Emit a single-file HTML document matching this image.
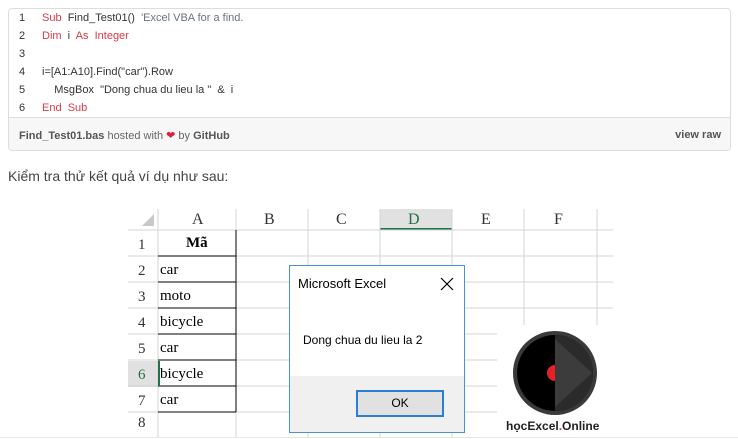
<!DOCTYPE html>
<html><head><style>
body{margin:0;width:738px;height:439px;background:#fff;position:relative;overflow:hidden;font-family:"Liberation Sans",sans-serif}
.gist{position:absolute;left:8px;top:8px;width:723px;height:143px;border:1px solid #ddd;border-radius:4px;box-sizing:border-box;overflow:hidden}
.ln{position:absolute;font-size:11px;color:#333;line-height:18px;white-space:pre}
.k{color:#d73a49}.c{color:#6a737d}
.foot{position:absolute;left:0;top:108px;width:100%;height:35px;background:#f7f7f7;border-top:1px solid #ddd;font-size:11px;color:#666}
.xl{position:absolute;left:128px;top:209px;width:485px;height:228px;background:#fff;font-family:"Liberation Serif",serif;overflow:hidden}
.a{position:absolute;font-size:15px;color:#000}
</style></head><body>
<div class="gist">
<div class="ln" style="left:10px;top:0">1</div><div class="ln" style="left:33px;top:0"><span class="k">Sub</span>  Find_Test01()  <span class="c">'Excel VBA for a find.</span></div>
<div class="ln" style="left:10px;top:18px">2</div><div class="ln" style="left:33px;top:18px"><span class="k">Dim</span>  i  <span class="k">As</span>  <span class="k">Integer</span></div>
<div class="ln" style="left:10px;top:36px">3</div>
<div class="ln" style="left:10px;top:54px">4</div><div class="ln" style="left:33px;top:54px">i=[A1:A10].Find("car").Row</div>
<div class="ln" style="left:10px;top:72px">5</div><div class="ln" style="left:33px;top:72px">    MsgBox  "Dong chua du lieu la "  &amp;  i</div>
<div class="ln" style="left:10px;top:90px">6</div><div class="ln" style="left:33px;top:90px"><span class="k">End</span>  <span class="k">Sub</span></div>
<div class="foot"><span style="position:absolute;left:10px;top:11px"><b style="color:#555">Find_Test01.bas</b> hosted with <span style="color:#e01e3c">&#10084;</span> by <b style="color:#555">GitHub</b></span><b style="position:absolute;right:9px;top:11px;color:#555">view raw</b></div>
</div>
<div style="position:absolute;left:8px;top:168px;font-size:14px;color:#444">Kiểm tra thử kết quả ví dụ như sau:</div>
<div class="xl">
<svg width="485" height="228" style="position:absolute;left:0;top:0">
<rect x="0" y="0" width="485" height="21" fill="#fff"/>
<rect x="252" y="0" width="72" height="21" fill="#e1e1e1"/>
<line x1="252" y1="20" x2="324" y2="20" stroke="#217346" stroke-width="2"/>
<rect x="0" y="152" width="30" height="26" fill="#e1e1e1"/>
<polygon points="26,5 26,17 14,17" fill="#c8c8c8"/>
<g stroke="#d4d4d4">
<line x1="30" y1="0" x2="30" y2="228"/><line x1="108" y1="0" x2="108" y2="228"/><line x1="180" y1="0" x2="180" y2="228"/><line x1="252" y1="0" x2="252" y2="228"/><line x1="324" y1="0" x2="324" y2="228"/><line x1="396" y1="0" x2="396" y2="228"/><line x1="469" y1="0" x2="469" y2="228"/>
<line x1="0" y1="21" x2="485" y2="21"/><line x1="0" y1="47" x2="485" y2="47"/><line x1="0" y1="73" x2="485" y2="73"/><line x1="0" y1="99" x2="485" y2="99"/><line x1="0" y1="125" x2="485" y2="125"/><line x1="0" y1="151" x2="485" y2="151"/><line x1="0" y1="177" x2="485" y2="177"/><line x1="0" y1="203" x2="485" y2="203"/>
</g>
<g stroke="#000"><line x1="108" y1="21" x2="108" y2="203"/><line x1="30" y1="47" x2="108" y2="47"/><line x1="30" y1="73" x2="108" y2="73"/><line x1="30" y1="99" x2="108" y2="99"/><line x1="30" y1="125" x2="108" y2="125"/><line x1="30" y1="151" x2="108" y2="151"/><line x1="30" y1="177" x2="108" y2="177"/><line x1="30" y1="203" x2="108" y2="203"/></g>
<line x1="31" y1="152" x2="31" y2="177" stroke="#217346" stroke-width="2"/>
</svg>
<div class="a" style="left:64px;top:2px;font-size:16px;color:#333">A</div>
<div class="a" style="left:136px;top:2px;font-size:16px;color:#333">B</div>
<div class="a" style="left:208px;top:2px;font-size:16px;color:#333">C</div>
<div class="a" style="left:280px;top:2px;font-size:16px;color:#217346">D</div>
<div class="a" style="left:353px;top:2px;font-size:16px;color:#333">E</div>
<div class="a" style="left:426px;top:2px;font-size:16px;color:#333">F</div>
<div class="a" style="left:10px;top:28px;color:#333">1</div><div class="a" style="left:10px;top:54px;color:#333">2</div><div class="a" style="left:10px;top:80px;color:#333">3</div><div class="a" style="left:10px;top:106px;color:#333">4</div><div class="a" style="left:10px;top:132px;color:#333">5</div><div class="a" style="left:10px;top:158px;color:#217346">6</div><div class="a" style="left:10px;top:184px;color:#333">7</div><div class="a" style="left:10px;top:206px;color:#333">8</div>
<div class="a" style="left:58px;top:26px;font-weight:bold">Mã</div>
<div class="a" style="left:32px;top:53px">car</div><div class="a" style="left:32px;top:79px">moto</div><div class="a" style="left:32px;top:105px">bicycle</div><div class="a" style="left:32px;top:131px">car</div><div class="a" style="left:32px;top:157px">bicycle</div><div class="a" style="left:32px;top:183px">car</div>
<div style="position:absolute;left:369px;top:116px;width:116px;height:112px;background:#fff"></div>
<svg width="100" height="100" style="position:absolute;left:384px;top:122px"><circle cx="43" cy="42" r="42" fill="#3a3a3a"/><circle cx="43" cy="42" r="38" fill="#000"/><path d="M43 4 A38 38 0 0 1 43 80 Z" fill="#2b2b2b"/><polygon points="43,8 80,42 43,76" fill="#3c3c3c"/><path d="M43 34 A8 8 0 0 0 43 50 Z" fill="#e8202a"/></svg>
<div style="position:absolute;left:378px;top:210px;font-family:'Liberation Sans',sans-serif;font-weight:bold;font-size:12px;color:#222">học<span>Excel</span><span style="color:#e8202a">.</span>Online</div>
<div style="position:absolute;left:161px;top:56px;width:176px;height:168px;border:1px solid #4a90d9;box-sizing:border-box;background:#fff;font-family:'Liberation Sans',sans-serif;overflow:hidden">
<div style="position:absolute;left:8px;top:10px;font-size:13px;color:#000">Microsoft Excel</div>
<svg width="14" height="14" style="position:absolute;left:150px;top:11px"><path d="M1 1L13 13M13 1L1 13" stroke="#000" stroke-width="1.2"/></svg>
<div style="position:absolute;left:13px;top:67px;font-size:12px;color:#000">Dong chua du lieu la 2</div>
<div style="position:absolute;left:0;top:110px;width:100%;height:56px;background:#f0f0f0"></div>
<div style="position:absolute;left:66px;top:124px;width:88px;height:27px;box-sizing:border-box;border:2px solid #2a7fd4;background:#e1e1e1;text-align:center;line-height:23px;font-size:12px">OK</div>
</div>
</div>
<div style="position:absolute;left:0;top:437px;width:738px;height:1px;background:#e6e6e6"></div>
</body></html>
